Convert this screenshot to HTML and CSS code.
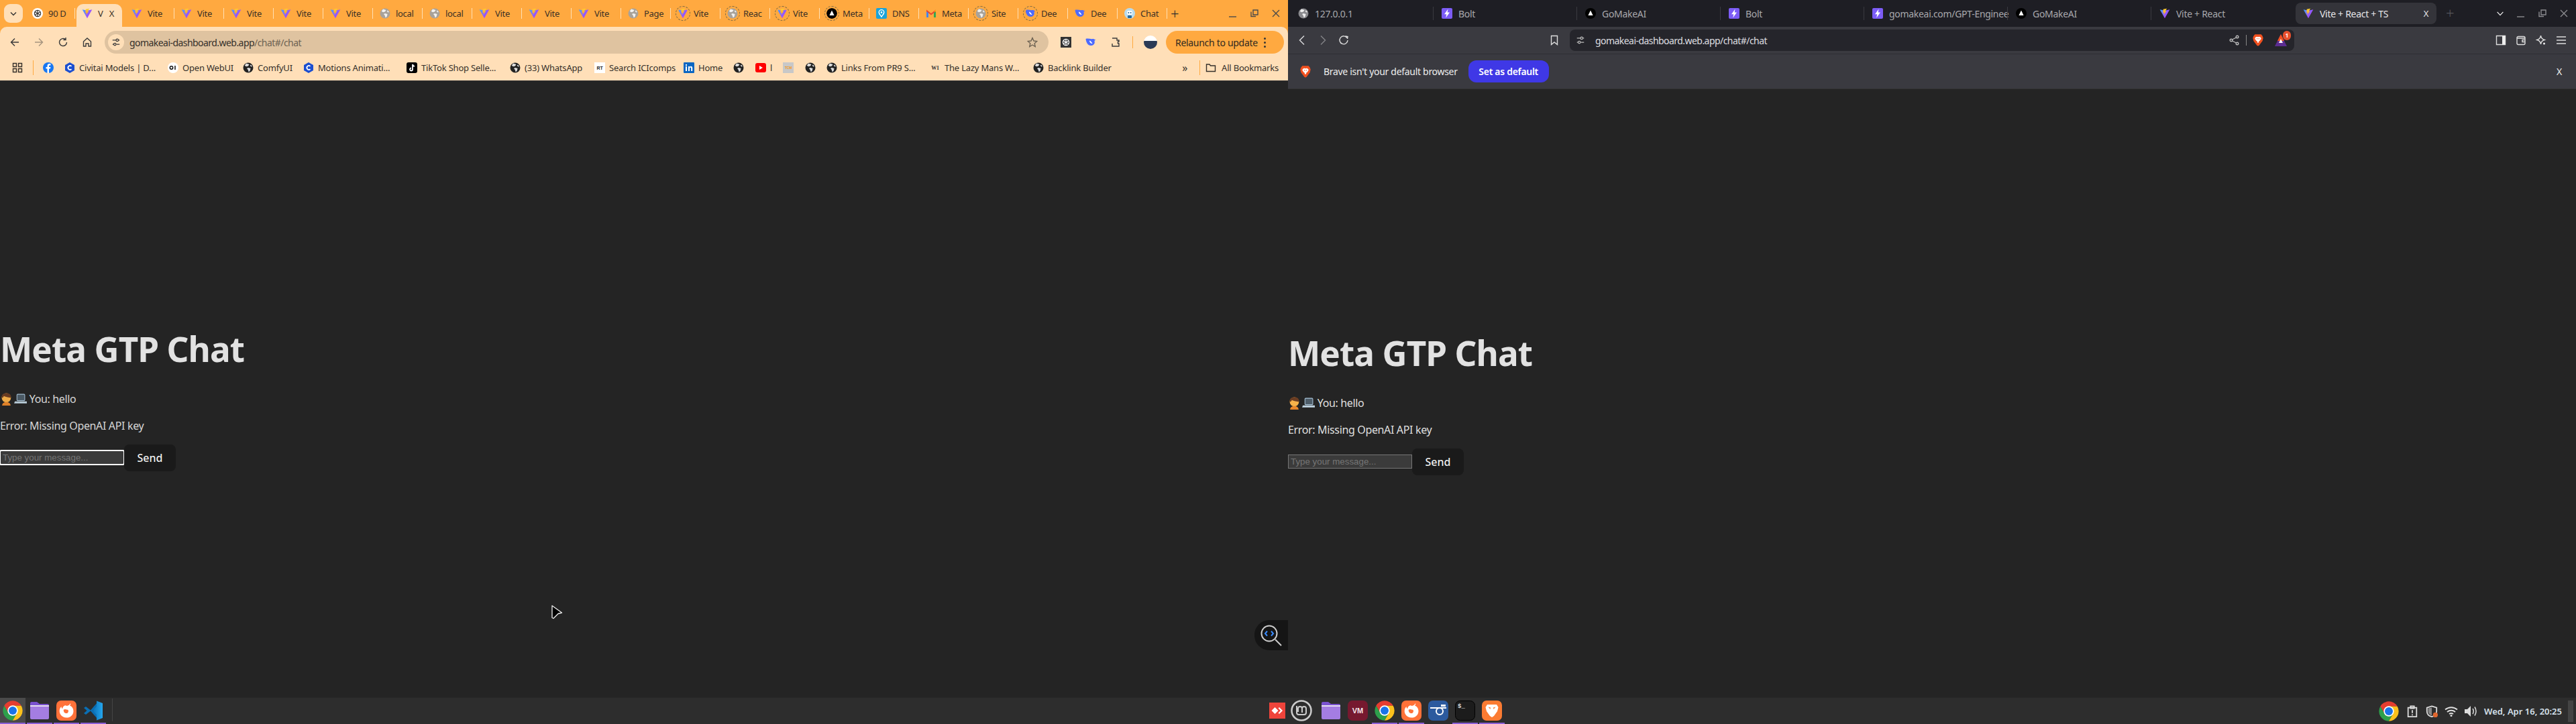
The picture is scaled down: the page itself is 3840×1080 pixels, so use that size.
FILE: index.html
```html
<!DOCTYPE html>
<html lang="en">
<head>
    <meta charset="UTF-8">
    <title>Meta GTP Chat</title>
    <link rel="stylesheet" href="styles.css">
</head>
<body>
    <!-- Shared icons -->
    <svg class="defs" aria-hidden="true">
        <defs>
            <linearGradient id="viteV" x1="0" y1="0" x2="1" y2="0.6"><stop offset="0" stop-color="#41a6ff"/><stop offset="1" stop-color="#bd34fe"/></linearGradient>
            <linearGradient id="viteB" x1="0" y1="0" x2="0" y2="1"><stop offset="0" stop-color="#ffd62e"/><stop offset="1" stop-color="#ff9a2e"/></linearGradient>
            <linearGradient id="codeGrad" x1="0" y1="0" x2="1" y2="0"><stop offset="0" stop-color="#0a6fb5"/><stop offset="1" stop-color="#25a7ee"/></linearGradient>
            <symbol id="vite" viewBox="0 0 24 24"><path fill="url(#viteV)" d="M1 3.500 12 23 23 3.500 12.500 5.600z"/><path fill="url(#viteB)" d="M16.600 1 8.600 2.600 8 10.500l2.200-.5-.7 5.500 6.200-8.800-2.600.5z"/></symbol>
            <symbol id="globe" viewBox="0 0 16 16"><circle cx="8" cy="8" r="7.500"/><path fill="#fff" opacity=".85" d="M5 1.600 9.500 3 8 5.600l-3 .6-2.200-1.400zM8 8l3.600 1-1 3.800-1.800 1.700-1.200-3.500L6 9zM12 3.400l2 2.600-1.800.5-1.500-2z"/></symbol>
            <symbol id="openai" viewBox="0 0 16 16"><circle cx="8" cy="8" r="8" fill="#fff"/><g fill="none" stroke="#333" stroke-width="1.200"><circle cx="8" cy="8" r="4.600"/><path d="M8 3.400v4.600l4 2.300M4 5.700l4 2.300-4 2.300M8 12.600V8l4-2.300"/></g></symbol>
            <symbol id="openai-dark" viewBox="0 0 16 16"><rect width="16" height="20" fill="#333"/><g fill="none" stroke="#fff" stroke-width="1.200"><circle cx="8" cy="8" r="4.600"/><path d="M8 3.400v4.600l4 2.300M4 5.700l4 2.300-4 2.300M8 12.600V8l4-2.300"/></g></symbol>
            <symbol id="meta" viewBox="0 0 16 16"><circle cx="8" cy="8" r="8" fill="#000"/><path fill="#fff" d="M8 3.600 11.600 11H4.400z"/></symbol>
            <symbol id="dns" viewBox="0 0 16 16"><rect width="16" height="16" rx="2" fill="#1aa3d9"/><path fill="none" stroke="#fff" stroke-width="1.400" d="M8 13C6 10 4.200 8.600 4.200 6.400a3.800 3.800 0 0 1 7.600 0C11.800 8.600 10 10 8 13z"/><circle cx="8" cy="6.400" r="1.300" fill="#fff"/></symbol>
            <symbol id="gmail" viewBox="0 0 16 16"><path fill="#4285f4" d="M1 14V4l3 2v8z"/><path fill="#34a853" d="M15 14V4l-3 2v8z"/><path fill="#ea4335" d="M1 2.500 8 8l7-5.500V5L8 10.500 1 5z"/><path fill="#fbbc04" d="M12 6l3-3.500V5z"/></symbol>
            <symbol id="deep" viewBox="0 0 16 16"><path fill="#4d6bfe" d="M15.500 3.500c-.6.300-.8.700-1.300.8C13 2.800 11 2.700 9.500 3.200 6.500 2.800 2.500 2.200.5 3c.5 5 3 10 7.800 10 2.700 0 4.600-1.500 5.400-3.800.3-1.200.2-2.300-.4-3.300.9-.5 1.700-1.300 2.200-2.400z"/><path fill="#fff" d="M6 5.500c2 .3 3 2 4.500 4.500-2 .2-4.500-1.500-4.500-4.500z"/></symbol>
            <symbol id="bot" viewBox="0 0 16 16"><circle cx="8" cy="8" r="8" fill="#b9dcee"/><rect x="4" y="4" width="8" height="6" rx="2" fill="#fff"/><circle cx="6.300" cy="7" r="1" fill="#27699a"/><circle cx="9.700" cy="7" r="1" fill="#27699a"/><rect x="5" y="11" width="6" height="4" rx="1" fill="#27699a"/></symbol>
            <symbol id="bolt" viewBox="0 0 16 16"><rect width="16" height="16" rx="2" fill="#7c5cf6"/><path fill="#fff" d="M9.500 1.500 4 9.300h3.200L6.300 14.500 12 6.600H8.700z"/></symbol>
            <symbol id="civitai" viewBox="0 0 16 16"><path fill="#1c4fd0" d="M8 0l7 4v8l-7 4-7-4V4z"/><path fill="none" stroke="#fff" stroke-width="1.800" d="M10.500 5.800a3 3 0 1 0 0 4.400"/></symbol>
            <symbol id="brave" viewBox="0 0 24 28"><path fill="#f1501f" d="M5 1h14l3 3.500L23.500 9 22 15.500 15 25l-3 2-3-2-7-9.500L.5 9 2 4.500z"/><path fill="#fff" d="M6 7.500 9.500 6l2.500 1 2.500-1L18 7.500l1 3-3 4.500-2.500 1.500.5 2-2 1.500L10 18.500l.5-2L8 15 5 10.500zM8.500 10l2 2.500.5-2.500zm7 0-2.500 0 .5 2.500z"/></symbol>
            <symbol id="chrome" viewBox="0 0 48 48"><path fill="#e53d30" d="M24 13H43.050A22 22 0 0 0 4.950 13L14.500 29.500z"/><path fill="#2d9f4b" d="M14.500 29.500 4.950 13A22 22 0 0 0 24 46L33.500 29.500z"/><path fill="#fcc11c" d="M24 13H43.050A22 22 0 0 1 24 46L33.500 29.500z"/><circle cx="24" cy="24" r="11.500" fill="#fff"/><circle cx="24" cy="24" r="9" fill="#1a73e8"/></symbol>
            <symbol id="folder" viewBox="0 0 30 28"><path fill="#7a52cf" d="M1 3a2 2 0 0 1 2-2h8l4 3h12a2 2 0 0 1 2 2v6H1z"/><rect x="1" y="6" width="28" height="2" fill="#e6e0f0"/><path fill="#a47de2" d="M1 8h28v17a2 2 0 0 1-2 2H3a2 2 0 0 1-2-2z"/></symbol>
            <symbol id="firefox" viewBox="0 0 30 30"><rect width="30" height="30" rx="7" fill="#ff7139"/><path fill="#fff" d="M21 4c.5 1.500 0 2.500-1 3.500 2 .8 3.500 2 4.500 4C26.500 16 25.500 21 21 24c-5 3-12 1.500-15-3.500C3.500 16 5 11 7.500 9c0 1.500.5 2.500 1.500 3.200.5-2.500 2-4.500 4-5 1 0 2 .3 2.800.8C18 7.500 20 6.500 21 4z"/><path fill="#ff7139" d="M10.500 14c1.500-1 3-1.500 4.500-.5 1.700-.3 3 .5 3 2.200 0 2.300-2 3.800-4 3.300-1.500-.3-2.800-1.600-3-3 .1-.7-.2-1.300-.5-2z"/></symbol>
            <symbol id="vscode" viewBox="0 0 30 30"><path fill="#0a6fb5" d="M1 11l3-2 7 5.500L21 3v7l-7 5 7 5v7L11 15.500 4 21l-3-2 4.500-4z"/><path fill="url(#codeGrad)" d="M20 .5 29 4v22l-9 3.500V21l-6-6 6-6z"/></symbol>
            <symbol id="cursor" viewBox="0 0 18 22"><path fill="#000" stroke="#eee" stroke-width="1.300" stroke-linejoin="round" d="M2 1.500 16.500 12l-5.500 1.500L4 20.500 2 19.500z"/></symbol>
            <symbol id="lionapp" viewBox="0 0 30 30"><rect width="30" height="30" rx="7" fill="#fb7b32"/><path fill="#fff" d="M8 6h14l2.500 4-1.500 6-5 7-3 2-3-2-5-7-1.500-6zm1.500 3.500 3 3.500.5-2.500zm11 0-3.500 1 .5 2.500z"/></symbol>
        </defs>
    </svg>

    <div class="screen">
        <div class="windows">
            <!-- Chrome window -->
            <section class="window chrome">
                <div class="tabstrip">
                    <button class="tab-search"><svg class="ico" viewBox="0 0 16 16"><path class="line" d="M4 6.500 8 10.500l4-4"/></svg></button>
                    <div class="tab"><svg class="fav"><use href="#openai"/></svg><span>90 D</span></div>
                    <div class="tab active"><svg class="fav"><use href="#vite"/></svg><span>V</span><b class="x">X</b></div>
                    <div class="tab"><svg class="fav"><use href="#vite"/></svg><span>Vite</span></div>
                    <div class="tab"><svg class="fav"><use href="#vite"/></svg><span>Vite</span></div>
                    <div class="tab"><svg class="fav"><use href="#vite"/></svg><span>Vite</span></div>
                    <div class="tab"><svg class="fav"><use href="#vite"/></svg><span>Vite</span></div>
                    <div class="tab"><svg class="fav"><use href="#vite"/></svg><span>Vite</span></div>
                    <div class="tab"><svg class="fav grey"><use href="#globe"/></svg><span>local</span></div>
                    <div class="tab"><svg class="fav grey"><use href="#globe"/></svg><span>local</span></div>
                    <div class="tab"><svg class="fav"><use href="#vite"/></svg><span>Vite</span></div>
                    <div class="tab"><svg class="fav"><use href="#vite"/></svg><span>Vite</span></div>
                    <div class="tab"><svg class="fav"><use href="#vite"/></svg><span>Vite</span></div>
                    <div class="tab"><svg class="fav grey"><use href="#globe"/></svg><span>Page</span></div>
                    <div class="tab"><svg class="fav ring"><use href="#vite"/></svg><span>Vite</span></div>
                    <div class="tab"><svg class="fav ring grey"><use href="#globe"/></svg><span>Reac</span></div>
                    <div class="tab"><svg class="fav ring"><use href="#vite"/></svg><span>Vite</span></div>
                    <div class="tab"><svg class="fav ring"><use href="#meta"/></svg><span>Meta</span></div>
                    <div class="tab"><svg class="fav"><use href="#dns"/></svg><span>DNS</span></div>
                    <div class="tab"><svg class="fav"><use href="#gmail"/></svg><span>Meta</span></div>
                    <div class="tab"><svg class="fav ring grey"><use href="#globe"/></svg><span>Site</span></div>
                    <div class="tab"><svg class="fav ring"><use href="#deep"/></svg><span>Dee</span></div>
                    <div class="tab"><svg class="fav"><use href="#deep"/></svg><span>Dee</span></div>
                    <div class="tab"><svg class="fav"><use href="#bot"/></svg><span>Chat</span></div>
                    <div class="plus">+</div>
                    <div class="winctl">
                        <svg class="ico" viewBox="0 0 16 16"><path class="line" d="M2 13h11"/></svg>
                        <svg class="ico" viewBox="0 0 16 16"><path class="line" d="M3 5.500v7h7M6 3h7v7H6z"/></svg>
                        <svg class="ico" viewBox="0 0 16 16"><path class="line" d="M3 3l10 10M13 3 3 13"/></svg>
                    </div>
                </div>
                <div class="toolbar">
                    <div class="nav">
                        <svg class="ico" viewBox="0 0 16 16"><path class="line" d="M14 8H2.500M8 2.500 2.500 8 8 13.500"/></svg>
                        <svg class="ico dim" viewBox="0 0 16 16"><path class="line" d="M2 8h11.500M8 2.500 13.500 8 8 13.500"/></svg>
                        <svg class="ico" viewBox="0 0 16 16"><path class="line" d="M13.500 8A5.500 5.500 0 1 1 11.500 3.800M12 1v3.500H8.500"/></svg>
                        <svg class="ico" viewBox="0 0 16 16"><path class="line" d="M2.500 7 8 2l5.500 5v7h-3.500v-4H6v4H2.500z"/></svg>
                    </div>
                    <div class="omnibox">
                        <span class="tune"><svg class="ico small" viewBox="0 0 16 16"><path class="line" d="M2 4.500h6M12.500 4.500H14M2 11.500h2M8.500 11.500H14"/><circle class="line" cx="10" cy="4.500" r="2"/><circle class="line" cx="6" cy="11.500" r="2"/></svg></span>
                        <span class="url">gomakeai-dashboard.web.app<span class="path">/chat#/chat</span></span>
                        <svg class="ico star" viewBox="0 0 16 16"><path class="line" d="M8 1.500 10 6l4.800.5-3.600 3.200 1 4.800L8 12l-4.200 2.500 1-4.800L1.200 6.500 6 6z"/></svg>
                    </div>
                    <div class="ext">
                        <svg class="fav"><use href="#openai-dark"/></svg>
                        <svg class="fav"><use href="#deep"/></svg>
                        <svg class="ico" viewBox="0 0 16 16"><path class="line" d="M3 2h7v3h3v2h-1.500v3H13v4H3v-4"/></svg>
                        <i class="tb-sep"></i>
                        <span class="avatar"></span>
                    </div>
                    <div class="relaunch">Relaunch to update<span class="dots"><i></i><i></i><i></i></span></div>
                </div>
                <div class="bookmarks">
                    <svg class="ico" viewBox="0 0 16 16"><path class="line" d="M1.500 1.500h5v5h-5zM9.500 1.500h5v5h-5zM1.500 9.500h5v5h-5zM9.500 9.500h5v5h-5z"/></svg>
                    <i class="bm-sep"></i>
                    <div class="bm"><svg class="fav" viewBox="0 0 16 16"><circle cx="8" cy="8" r="8" fill="#1877f2"/><path fill="#fff" d="M9 16V9.500h2l.4-2.500H9V5.600c0-.8.3-1.200 1.200-1.200h1.300V2.200C11 2.100 10.400 2 9.800 2 7.800 2 6.500 3.200 6.500 5.300V7H4.500v2.500h2V16z"/></svg></div>
                    <div class="bm"><svg class="fav"><use href="#civitai"/></svg><span>Civitai Models | D...</span></div>
                    <div class="bm"><svg class="fav" viewBox="0 0 16 16"><circle cx="8" cy="8" r="8" fill="#fff"/><circle cx="5.500" cy="8" r="2.200" fill="none" stroke="#111" stroke-width="1.500"/><path stroke="#111" stroke-width="1.500" d="M11 5v6"/></svg><span>Open WebUI</span></div>
                    <div class="bm"><svg class="fav dark"><use href="#globe"/></svg><span>ComfyUI</span></div>
                    <div class="bm"><svg class="fav"><use href="#civitai"/></svg><span>Motions Animati...</span></div>
                    <div class="bm"><svg class="fav" viewBox="0 0 16 16"><rect width="16" height="16" rx="3" fill="#000"/><path fill="none" stroke="#fff" stroke-width="1.800" d="M9 3v7.500a2 2 0 1 1-2-2M9 3c.3 1.600 1.400 2.600 3 2.800"/></svg><span>TikTok Shop Selle...</span></div>
                    <div class="bm"><svg class="fav dark"><use href="#globe"/></svg><span>(33) WhatsApp</span></div>
                    <div class="bm"><svg class="fav" viewBox="0 0 16 16"><rect width="16" height="16" fill="#fff"/><text x="8" y="11" class="tiny">RT</text></svg><span>Search ICIcomps</span></div>
                    <div class="bm"><svg class="fav" viewBox="0 0 16 16"><rect width="16" height="16" rx="1" fill="#0a66c2"/><path fill="#fff" d="M3 6h2v7H3zM3 3h2v2H3zM7 6h2v1c.5-.8 1.200-1.200 2-1.200 1.500 0 2.200 1 2.200 2.700V13h-2V9c0-.8-.3-1.300-1-1.300S9 8.200 9 9v4H7z"/></svg><span>Home</span></div>
                    <div class="bm"><svg class="fav dark"><use href="#globe"/></svg></div>
                    <div class="bm"><svg class="fav" viewBox="0 0 16 16"><rect y="1" width="16" height="14" rx="3" fill="#f00"/><path fill="#fff" d="M6 5l5 3-5 3z"/></svg><span>l</span></div>
                    <div class="bm"><svg class="fav" viewBox="0 0 16 16"><rect width="16" height="16" fill="#c8c8c8"/><text x="8" y="10" class="tiny orange">TCM</text></svg></div>
                    <div class="bm"><svg class="fav dark"><use href="#globe"/></svg></div>
                    <div class="bm"><svg class="fav dark"><use href="#globe"/></svg><span>Links From PR9 S...</span></div>
                    <div class="bm"><svg class="fav" viewBox="0 0 16 16"><text x="8" y="11" class="tiny serif">W1</text></svg><span>The Lazy Mans W...</span></div>
                    <div class="bm"><svg class="fav dark"><use href="#globe"/></svg><span>Backlink Builder</span></div>
                    <div class="bm-end">
                        <span class="more">»</span>
                        <i class="bm-sep"></i>
                        <svg class="ico" viewBox="0 0 16 16"><path class="line" d="M1.500 3h4.500l1.500 2h7v8.500h-13z"/></svg>
                        <span>All Bookmarks</span>
                    </div>
                </div>
                <main class="page focused">
                    <h1>Meta GTP Chat</h1>
                    <p><svg class="emoji" viewBox="0 0 36 18"><circle cx="8" cy="7" r="6.500" fill="#f7b24a"/><path fill="#6b3d22" d="M1.500 7C1 2 5 .5 8.500.5 13 .5 15 3.500 14.500 7 12 6.500 7 6 4.500 4.500 4 6 3 7 1.500 7z"/><path fill="#e8862a" d="M2 18c0-3.500 3-5 6-5s6 1.500 6 5z"/><rect x="23" y="2" width="11" height="9" rx="1" fill="#4d5c68" stroke="#a8c4d8"/><path fill="#c0d4e2" d="M20 12h17l1 3H19z"/></svg> You: hello</p>
                    <p>Error: Missing OpenAI API key</p>
                    <form class="chat-form">
                        <input type="text" placeholder="Type your message...">
                        <button type="button">Send</button>
                    </form>
                </main>
                <div class="zoom-pill">
                    <svg class="zoom-ico" viewBox="0 0 34 34"><circle cx="14" cy="14" r="11.500" fill="none" stroke="#ccc" stroke-width="2"/><path stroke="#ccc" stroke-width="2" d="M23 23l9 9"/><path fill="none" stroke="#3a8cff" stroke-width="2" d="M11 10.500 8 14l3 3.500M17 10.500l3 3.500-3 3.500"/></svg>
                </div>
                <svg class="pointer"><use href="#cursor"/></svg>
            </section>

            <!-- Brave window -->
            <section class="window brave">
                <div class="tabstrip">
                    <div class="tab"><svg class="fav lightgrey"><use href="#globe"/></svg><span>127.0.0.1</span></div>
                    <div class="tab"><svg class="fav"><use href="#bolt"/></svg><span>Bolt</span></div>
                    <div class="tab"><svg class="fav"><use href="#meta"/></svg><span>GoMakeAI</span></div>
                    <div class="tab"><svg class="fav"><use href="#bolt"/></svg><span>Bolt</span></div>
                    <div class="tab"><svg class="fav"><use href="#bolt"/></svg><span>gomakeai.com/GPT-Enginee</span></div>
                    <div class="tab"><svg class="fav"><use href="#meta"/></svg><span>GoMakeAI</span></div>
                    <div class="tab"><svg class="fav"><use href="#vite"/></svg><span>Vite + React</span></div>
                    <div class="tab active"><svg class="fav"><use href="#vite"/></svg><span>Vite + React + TS</span><b class="x">X</b></div>
                    <div class="plus">+</div>
                    <div class="winctl">
                        <svg class="ico small bright" viewBox="0 0 16 16"><path class="line" d="M3 5.500 8 11l5-5.500"/></svg>
                        <svg class="ico" viewBox="0 0 16 16"><path class="line" d="M2 13h11"/></svg>
                        <svg class="ico" viewBox="0 0 16 16"><path class="line" d="M3 5.500v7h7M6 3h7v7H6z"/></svg>
                        <svg class="ico" viewBox="0 0 16 16"><path class="line" d="M3 3l10 10M13 3 3 13"/></svg>
                    </div>
                </div>
                <div class="toolbar">
                    <div class="nav">
                        <svg class="ico" viewBox="0 0 16 16"><path class="line" d="M11 1.500 4.500 8l6.500 6.500"/></svg>
                        <svg class="ico dim" viewBox="0 0 16 16"><path class="line" d="M5 1.500 11.500 8 5 14.500"/></svg>
                        <svg class="ico" viewBox="0 0 16 16"><path class="line" d="M13 4.500A6 6 0 1 0 14 8M10.500 2 14 2.500 13.500 6"/></svg>
                        <svg class="ico bookmark" viewBox="0 0 16 16"><path class="line" d="M3.500 1.500h9v13L8 11l-4.500 3.500z"/></svg>
                    </div>
                    <div class="omnibox">
                        <svg class="ico small" viewBox="0 0 16 16"><path class="line" d="M2 4.500h6M12.500 4.500H14M2 11.500h2M8.500 11.500H14"/><circle class="line" cx="10" cy="4.500" r="2"/><circle class="line" cx="6" cy="11.500" r="2"/></svg>
                        <span class="url">gomakeai-dashboard.web.app/chat#/chat</span>
                        <div class="omni-end">
                            <svg class="ico" viewBox="0 0 16 16"><circle class="line" cx="12" cy="3" r="1.800"/><circle class="line" cx="12" cy="13" r="1.800"/><circle class="line" cx="3" cy="8" r="1.800"/><path class="line" d="M4.600 7 10.500 4M4.600 9l5.900 3"/></svg>
                            <i class="omni-sep"></i>
                            <svg class="lion"><use href="#brave"/></svg>
                            <span class="rewards">
                                <svg class="tri" viewBox="0 0 20 20"><path fill="#5c2d91" d="M10 1 19 19H1z"/><path fill="#f1501f" d="M10 1 15 11H5z"/><path fill="#fff" d="M10 8 13 14H7z"/></svg>
                                <b class="badge">1</b>
                            </span>
                        </div>
                    </div>
                    <div class="side">
                        <svg class="ico" viewBox="0 0 16 16"><path class="line" d="M1.500 1.500h13v13h-13z"/><path d="M10 1.500h4.500v13H10z" fill="#eee"/></svg>
                        <svg class="ico" viewBox="0 0 16 16"><path class="line" d="M2 4.500a2 2 0 0 1 2-2h8a2 2 0 0 1 2 2v8a2 2 0 0 1-2 2H4a2 2 0 0 1-2-2zM2 5h12M14 7.500H10v3h4"/></svg>
                        <svg class="ico" viewBox="0 0 16 16"><path class="line" d="M7.500 1C8 5 9.500 6.500 13 7.500 9.500 8.500 8 10 7.500 14 7 10 5.500 8.500 2 7.500 5.500 6.500 7 5 7.500 1z"/><circle cx="12.500" cy="13" r="1.500" fill="#eee"/></svg>
                        <svg class="ico" viewBox="0 0 16 16"><path class="line" d="M1 3h14M1 8h14M1 13h14"/></svg>
                    </div>
                </div>
                <div class="infobar">
                    <svg class="lion"><use href="#brave"/></svg>
                    <span class="info-text">Brave isn't your default browser</span>
                    <button class="set-default">Set as default</button>
                    <span class="info-close">X</span>
                </div>
                <main class="page">
                    <h1>Meta GTP Chat</h1>
                    <p><svg class="emoji" viewBox="0 0 36 18"><circle cx="8" cy="7" r="6.500" fill="#f7b24a"/><path fill="#6b3d22" d="M1.500 7C1 2 5 .5 8.500.5 13 .5 15 3.500 14.500 7 12 6.500 7 6 4.500 4.500 4 6 3 7 1.500 7z"/><path fill="#e8862a" d="M2 18c0-3.500 3-5 6-5s6 1.500 6 5z"/><rect x="23" y="2" width="11" height="9" rx="1" fill="#4d5c68" stroke="#a8c4d8"/><path fill="#c0d4e2" d="M20 12h17l1 3H19z"/></svg> You: hello</p>
                    <p>Error: Missing OpenAI API key</p>
                    <form class="chat-form">
                        <input type="text" placeholder="Type your message...">
                        <button type="button">Send</button>
                    </form>
                </main>
            </section>
        </div>

        <!-- Desktop panel -->
        <footer class="taskbar">
            <div class="dock left">
                <div class="app running current"><svg class="app-ico"><use href="#chrome"/></svg></div>
                <div class="app running"><svg class="app-ico"><use href="#folder"/></svg></div>
                <div class="app running"><svg class="app-ico"><use href="#firefox"/></svg></div>
                <div class="app running"><svg class="app-ico"><use href="#vscode"/></svg></div>
                <i class="dock-sep"></i>
            </div>
            <div class="dock">
                <div class="app"><svg class="app-ico small" viewBox="0 0 24 24"><rect width="24" height="24" fill="#ef443b"/><path fill="#fff" d="M8.500 7l5 5-5 5-5-5zM15 7l5 5-5 5-1.500-1.500L17 12l-3.500-3.500z"/></svg></div>
                <div class="app mint"><svg class="app-ico" viewBox="0 0 32 32"><circle cx="16" cy="16" r="14.500" fill="none" stroke="#ccc" stroke-width="2.500"/><path fill="none" stroke="#ccc" stroke-width="2" d="M9 9v10a3 3 0 0 0 3 3h8a3 3 0 0 0 3-3v-6a3 3 0 0 0-6 0v6M17 13a3 3 0 0 0-6 0v5"/></svg></div>
                <div class="app"><svg class="app-ico"><use href="#folder"/></svg></div>
                <div class="app"><svg class="app-ico" viewBox="0 0 30 30"><rect width="30" height="30" rx="7" fill="#76192f"/><text x="15" y="19" class="vm">VM</text></svg></div>
                <div class="app running"><svg class="app-ico chrome-ico"><use href="#chrome"/></svg></div>
                <div class="app running"><svg class="app-ico"><use href="#firefox"/></svg></div>
                <div class="app"><svg class="app-ico" viewBox="0 0 30 30"><rect width="30" height="30" rx="7" fill="#2c5a9e"/><path fill="#fff" d="M3 10h24v2H3zM19 6h7v3h-7z"/><circle cx="17" cy="16" r="5" fill="none" stroke="#fff" stroke-width="2"/></svg></div>
                <div class="app running"><svg class="app-ico" viewBox="0 0 30 30"><rect x=".5" y=".5" width="29" height="29" rx="7" fill="#1c1c1c" stroke="#000"/><text x="4" y="11" class="term">$_</text></svg></div>
                <div class="app running"><svg class="app-ico"><use href="#lionapp"/></svg></div>
            </div>
            <div class="tray">
                <svg class="tray-chrome"><use href="#chrome"/></svg>
                <svg class="tray-ico" viewBox="0 0 18 20"><path fill="none" stroke="#ddd" stroke-width="2" d="M2 4h14v15H2zM6 1.500h6V5H6z"/><path stroke="#ddd" stroke-width="2" d="M9 8v5M9 15v2"/></svg>
                <svg class="tray-ico" viewBox="0 0 20 20"><path fill="none" stroke="#ddd" stroke-width="2" d="M10 1.500 18 4v6c0 5-4 8-8 9-4-1-8-4-8-9V4z"/><path fill="#888" d="M10 4v13c-3-1-6-3-6-7V5z"/><circle cx="16" cy="16" r="4" fill="#e0662e"/></svg>
                <svg class="tray-ico" viewBox="0 0 20 16"><path fill="none" stroke="#ddd" stroke-width="2" d="M1 5.500c5.500-4.500 12.500-4.500 18 0M4 9c3.500-3 8.500-3 12 0M7 12c2-1.300 4-1.300 6 0"/><circle cx="10" cy="14.500" r="1.500" fill="#ddd"/></svg>
                <svg class="tray-ico" viewBox="0 0 20 18"><path fill="#ddd" d="M1 6h4l5-5v16l-5-5H1z"/><path fill="none" stroke="#ddd" stroke-width="1.500" d="M13 5c1.500 2.500 1.500 5.500 0 8M16 2.500c2.500 4 2.500 9 0 13"/></svg>
                <time class="clock">Wed, Apr 16, 20:25</time>
                <i class="tray-block"></i>
            </div>
        </footer>
    </div>
</body>
</html>
```

FILE: styles.css
```css
* {
    box-sizing: border-box;
}

body {
    margin: 0;
    background-color: #242424;
    font-family: "Noto Sans", sans-serif;
}

.defs {
    position: absolute;
    width: 0;
    height: 0;
}

.screen {
    width: 3840px;
    height: 1080px;
    display: flex;
    flex-direction: column;
    overflow: hidden;
}

.windows {
    flex: 1;
    display: flex;
    min-height: 0;
}

.window {
    position: relative;
    width: 1920px;
    display: flex;
    flex-direction: column;
}

/* Common icon styles */
.ico {
    width: 16px;
    height: 16px;
    flex: none;
}

.ico.small {
    width: 14px;
    height: 14px;
}

.line {
    fill: none;
    stroke: currentColor;
    stroke-width: 1.4;
}

.dim {
    opacity: 0.45;
}

.fav {
    width: 16px;
    height: 16px;
    flex: none;
}

.grey {
    fill: #a8a29a;
}

.lightgrey {
    fill: #8a8a8e;
}

.dark {
    fill: #222;
}

.ring {
    border-radius: 50%;
    outline: 1px dashed #7d6a44;
    outline-offset: 2px;
}

.tiny {
    font: 700 7px "Liberation Sans", sans-serif;
    text-anchor: middle;
    fill: #222;
}

.tiny.orange {
    font-size: 5px;
    fill: #f59a23;
}

.tiny.serif {
    font-family: "Liberation Serif", serif;
    fill: #333;
    font-size: 8px;
}

/* Tabs */
.tabstrip {
    height: 40px;
    flex: none;
    display: flex;
    align-items: flex-end;
}

.tab {
    position: relative;
    width: 74px;
    height: 34px;
    flex: none;
    display: flex;
    align-items: center;
    gap: 8px;
    padding: 0 0 6px 8px;
    font-size: 13px;
    letter-spacing: -0.3px;
    white-space: nowrap;
}

.tab::after {
    content: "";
    position: absolute;
    right: 2px;
    top: 6px;
    width: 1px;
    height: 16px;
}

.tab .x {
    margin-left: auto;
    font-weight: 400;
    font-size: 13px;
    flex: none;
}

.plus {
    font-size: 22px;
    line-height: 1;
    font-weight: 300;
}

.winctl {
    margin-left: auto;
    display: flex;
    align-self: center;
}

/* Chrome window */
.chrome {
    background-color: #ffa940;
    color: #3a3026;
}

.chrome .tabstrip {
    padding-left: 6px;
}

.tab-search {
    width: 28px;
    height: 28px;
    margin: 0 6px 6px 0;
    padding: 6px;
    display: flex;
    border: none;
    border-radius: 9px;
    background-color: #ffdfb8;
    color: #333;
}

.chrome .tab::after {
    background-color: #ffe0b4;
}

.chrome .tab.active {
    width: 68px;
    margin-right: 6px;
    padding-right: 12px;
    border-radius: 10px 10px 0 0;
    background-color: #ffdfb8;
}

.chrome .tab.active::after {
    display: none;
}

.chrome .plus {
    margin: 0 0 9px 3px;
    color: #2d2d2d;
}

.chrome .winctl {
    gap: 16px;
    padding-right: 10px;
    color: #4a4a4a;
}

.toolbar {
    height: 46px;
    flex: none;
    display: flex;
    padding-top: 6px;
    border-radius: 10px 10px 0 0;
}

.chrome .toolbar {
    background-color: #ffdfb8;
    color: #3a3a3a;
}

.chrome .nav {
    width: 156px;
    height: 34px;
    flex: none;
    display: flex;
    align-items: center;
    gap: 20px;
    padding-left: 14px;
}

.omnibox {
    display: flex;
    align-items: center;
    border-radius: 17px;
}

.chrome .omnibox {
    width: 1407px;
    height: 34px;
    background-color: #dfc3a0;
    padding: 0 16px 0 5px;
}

.tune {
    width: 24px;
    height: 24px;
    display: flex;
    align-items: center;
    justify-content: center;
    border-radius: 50%;
    background-color: #ffdfb8;
    flex: none;
}

.url {
    font-size: 14px;
    letter-spacing: -0.55px;
    white-space: nowrap;
}

.chrome .url {
    margin-left: 8px;
    color: #35302a;
}

.path {
    color: #6d6252;
}

.star {
    margin-left: auto;
    color: #6d6252;
}

.ext {
    width: 175px;
    height: 34px;
    flex: none;
    display: flex;
    align-items: center;
    padding-left: 18px;
    gap: 21px;
}

.tb-sep {
    width: 1px;
    height: 18px;
    margin: 0 -2px 0 -4px;
    background-color: #ffa940;
}

.avatar {
    width: 20px;
    height: 20px;
    margin-left: -3px;
    border-radius: 50%;
    background: linear-gradient(to bottom, #fff 40%, #2b3a55 40%);
}

.relaunch {
    width: 176px;
    height: 34px;
    flex: none;
    display: flex;
    align-items: center;
    padding-left: 14px;
    border-radius: 17px;
    background-color: #ffa940;
    font-size: 14px;
    letter-spacing: -0.3px;
    color: #2f2a20;
    white-space: nowrap;
}

.dots {
    margin-left: 9px;
    display: flex;
    flex-direction: column;
    gap: 3px;
}

.dots i {
    width: 3px;
    height: 3px;
    border-radius: 50%;
    background-color: #333;
}

.bookmarks {
    height: 34px;
    flex: none;
    display: grid;
    grid-template-columns: 31px 15px 32px 154px 112px 90px 154px 154px 126px 133px 74px 33px 41px 33px 32px 154px 154px 130px 1fr;
    align-items: center;
    padding: 0 14px 4px 18px;
    background-color: #ffdfb8;
    color: #35302a;
    font-size: 13px;
    letter-spacing: -0.2px;
    white-space: nowrap;
}

.bm {
    display: flex;
    align-items: center;
    gap: 6px;
}

.bm-sep {
    width: 1px;
    height: 22px;
    background-color: #ffa940;
}

.bm-end {
    display: flex;
    align-items: center;
    justify-content: flex-end;
    gap: 8px;
}

.more {
    margin-right: 10px;
    font-size: 16px;
}

/* Page content, the same app in both windows */
.page {
    flex: 1;
    display: flex;
    flex-direction: column;
    justify-content: center;
    align-items: flex-start;
    background-color: #242424;
    border-top: 1px solid #333;
    color: rgba(255, 255, 255, 0.87);
}

h1 {
    margin: 34px 0;
    font-size: 51.2px;
    line-height: 1.1;
    font-weight: 700;
    letter-spacing: -0.9px;
}

p {
    margin: 0 0 16px;
    font-size: 16px;
    line-height: 24px;
    letter-spacing: -0.35px;
}

.focused p {
    opacity: 0.95;
}

.emoji {
    width: 40px;
    height: 19px;
    vertical-align: -4px;
}

.chat-form {
    display: flex;
    align-items: center;
    height: 40px;
}

input {
    width: 185px;
    height: 21px;
    padding: 1px 3px;
    border: 1px solid #767676;
    background-color: #3b3b3b;
    color: #fff;
    font: 13.33px "Liberation Sans", sans-serif;
}

input::placeholder {
    color: #757575;
}

.focused input {
    outline: 2px solid #fff;
    outline-offset: -1px;
    border-radius: 2px;
}

.chat-form button {
    width: 77px;
    height: 40px;
    border: none;
    border-radius: 8px;
    background-color: #1a1a1a;
    color: rgba(255, 255, 255, 0.95);
    font: 500 16px "Noto Sans", sans-serif;
}

.zoom-pill {
    position: absolute;
    top: 925px;
    right: 0;
    width: 50px;
    height: 45px;
    display: flex;
    align-items: center;
    justify-content: center;
    border-radius: 22px 0 0 22px;
    background-color: #151515;
}

.zoom-ico {
    width: 34px;
    height: 34px;
}

.pointer {
    position: absolute;
    top: 902px;
    left: 821px;
    width: 18px;
    height: 22px;
}

/* Brave window */
.brave {
    background-color: #1e1e24;
    color: #a8a8ac;
}

.brave .tabstrip {
    padding-left: 2px;
}

.brave .tab {
    width: 214px;
    height: 36px;
    padding: 0 12px 4px 13px;
    gap: 9px;
    font-size: 14px;
}

.brave .tab::after {
    left: 0;
    right: auto;
    top: 6px;
    height: 20px;
    background-color: #3a3a40;
}

.brave .tab:first-child::after {
    display: none;
}

.brave .tab.active {
    width: 210px;
    height: 32px;
    margin: 0 0 4px 2px;
    padding: 0 12px 0 11px;
    border-radius: 8px;
    background-color: #34343a;
    color: #e6e6e8;
}

.brave .tab.active::after {
    display: none;
}

.brave .plus {
    margin: 0 0 10px 14px;
    color: #55555a;
}

.brave .winctl {
    gap: 16px;
    padding-right: 10px;
    color: #8c8c90;
}

.bright {
    color: #eee;
    margin-top: 1px;
}

.brave .toolbar {
    height: 40px;
    padding-top: 4px;
    border-radius: 0;
    background-color: #3a3a40;
    color: #ddd;
}

.brave .nav {
    width: 420px;
    height: 32px;
    flex: none;
    display: flex;
    align-items: center;
    gap: 15px;
    padding-left: 13px;
}

.bookmark {
    margin-left: auto;
    margin-right: 15px;
}

.brave .omnibox {
    width: 1080px;
    height: 32px;
    flex: none;
    padding: 0 0 0 9px;
    border-radius: 8px;
    background-color: #25252b;
    color: #bbb;
}

.brave .url {
    margin-left: 15px;
    color: #dedee0;
}

.omni-end {
    margin-left: auto;
    display: flex;
    align-items: center;
    padding-right: 10px;
    gap: 9px;
}

.omni-sep {
    width: 1px;
    height: 16px;
    background-color: #888;
}

.lion {
    width: 16px;
    height: 20px;
    flex: none;
}

.rewards {
    position: relative;
    width: 20px;
    height: 20px;
    margin-left: 7px;
}

.tri {
    width: 20px;
    height: 20px;
}

.badge {
    position: absolute;
    top: -4px;
    right: -5px;
    width: 12px;
    height: 14px;
    border-radius: 6px;
    background-color: #e8502d;
    color: #fff;
    font-size: 8px;
    text-align: center;
    line-height: 14px;
}

.side {
    display: flex;
    align-items: center;
    gap: 14px;
    height: 32px;
    margin-left: auto;
    padding-right: 14px;
}

.infobar {
    height: 52px;
    flex: none;
    display: flex;
    align-items: center;
    padding-left: 18px;
    border-top: 1px solid #2e2e33;
    background-color: #3a3a40;
    color: #eee;
    font-size: 14px;
    letter-spacing: -0.3px;
}

.info-text {
    margin-left: 19px;
}

.set-default {
    margin-left: 16px;
    width: 120px;
    height: 33px;
    border: none;
    border-radius: 12px;
    background-color: #3f38e6;
    color: #fff;
    font: 600 14px "Noto Sans", sans-serif;
    letter-spacing: -0.3px;
}

.info-close {
    margin-left: auto;
    padding-right: 21px;
    font-size: 14px;
}

/* Panel */
.taskbar {
    height: 40px;
    flex: none;
    display: grid;
    grid-template-columns: 1885px 360px 1fr;
    background-color: #2d2d2d;
    border-top: 1px solid #262626;
}

.dock {
    display: flex;
    gap: 2px;
}

.app {
    width: 38px;
    height: 39px;
    display: flex;
    align-items: center;
    justify-content: center;
    border-bottom: 2px solid transparent;
}

.app.running {
    border-bottom-color: #8a5fd6;
}

.app.current {
    background-color: #4a4a4a;
}

.app-ico {
    width: 30px;
    height: 30px;
}

.app-ico.small {
    width: 24px;
    height: 24px;
}

.current .app-ico,
.app-ico.chrome-ico {
    width: 32px;
    height: 32px;
}

.mint .app-ico {
    margin-left: -8px;
    width: 32px;
    height: 32px;
}

.dock-sep {
    width: 1px;
    height: 34px;
    margin: 1px 0 0 7px;
    background-color: #444;
}

.vm {
    font: 700 11px "Liberation Sans", sans-serif;
    text-anchor: middle;
    fill: #f2e4e8;
}

.term {
    font: 700 9px "Liberation Mono", monospace;
    fill: #ddd;
}

.tray {
    display: flex;
    align-items: center;
    justify-content: flex-end;
    gap: 9px;
    padding-right: 4px;
}

.tray-chrome {
    width: 32px;
    height: 32px;
}

.tray-ico {
    width: 20px;
    height: 18px;
}

.clock {
    margin-left: 1px;
    color: #d6e0ea;
    font-size: 13px;
    font-weight: 600;
    white-space: nowrap;
}

.tray-block {
    width: 8px;
    height: 32px;
    background-color: #444;
}
```
